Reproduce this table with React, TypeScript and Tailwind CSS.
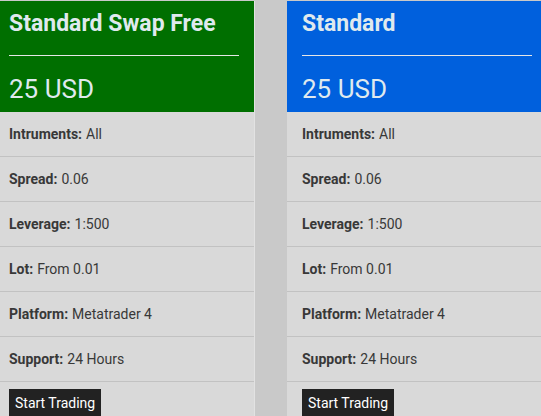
import React from "react";

const rows: [string, string][] = [
  ["Intruments:", "All"],
  ["Spread:", "0.06"],
  ["Leverage:", "1:500"],
  ["Lot:", "From 0.01"],
  ["Platform:", "Metatrader 4"],
  ["Support:", "24 Hours"],
];

function Card({ title, header }: { title: string; header: string }) {
  return (
    <div className="w-[261px] shrink-0 bg-[#d9d9d9] border-r border-[#e2e2e2]">
      <div className={`${header} h-[111px] px-[15px] pt-[7px] text-[#dfe9ee]`}>
        <div className="text-[23px] font-bold leading-[31px]">{title}</div>
        <div className="mt-[16px] h-px bg-[#e6e6e6]" />
        <div className="mt-[18px] text-[26px] leading-[30px]">25 USD</div>
      </div>
      {rows.map(([k, v]) => (
        <div
          key={k}
          className="h-[45px] border-b border-[#c2c2c2] px-[15px] flex items-center text-[14px] text-[#383838]"
        >
          <span className="font-bold">{k}</span>
          <span className="ml-1">{v}</span>
        </div>
      ))}
      <div className="px-[15px] pt-[7px] pb-4">
        <span className="inline-block bg-[#222222] text-white text-[14px] px-[6px] leading-[28px]">
          Start Trading
        </span>
      </div>
    </div>
  );
}

export default function App() {
  return (
    <div
      className="w-[541px] h-[416px] overflow-hidden bg-[#c9c9c9] pt-px flex gap-[32px] -ml-0"
      style={{ fontFamily: "Roboto, 'Liberation Sans', sans-serif" }}
    >
      <div className="-ml-[6px] flex gap-[32px]">
        <Card title="Standard Swap Free" header="bg-[#006f00]" />
        <Card title="Standard" header="bg-[#0060dd]" />
      </div>
    </div>
  );
}
